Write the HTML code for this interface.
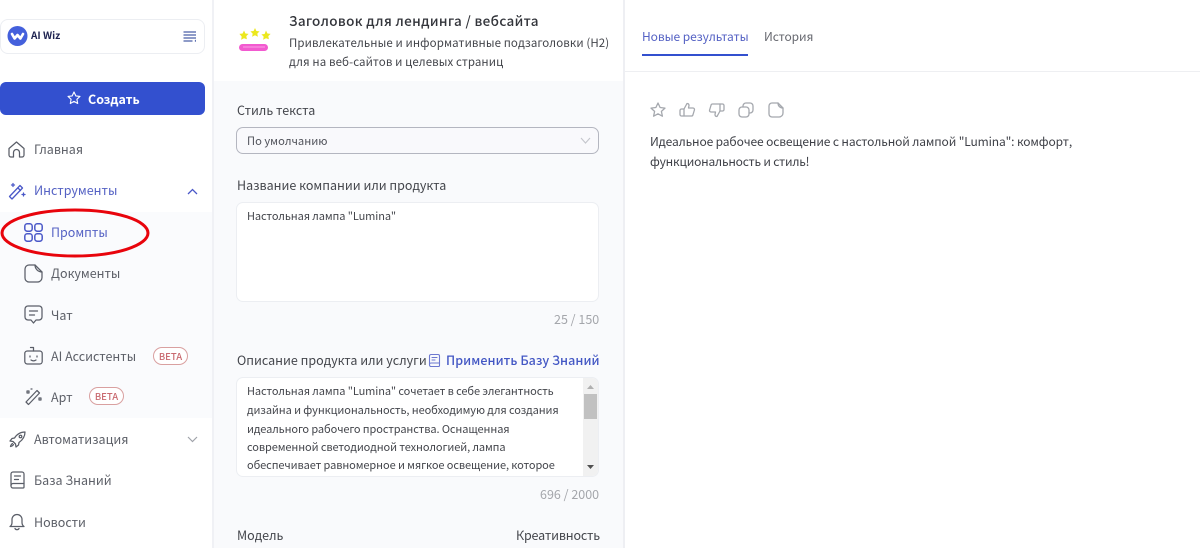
<!DOCTYPE html>
<html lang="ru">
<head>
<meta charset="utf-8">
<title>AI Wiz</title>
<style>
html,body{margin:0;padding:0;width:1200px;height:548px;overflow:hidden;background:#fff}
body{position:relative;font-family:"Noto Sans CJK SC","Liberation Sans",sans-serif;color:#3d3d45}
.t{position:absolute;white-space:nowrap;line-height:18px;font-size:13px}
.b{position:absolute;box-sizing:border-box}
svg{position:absolute;overflow:visible}
.i{fill:none;stroke:#5a5e68;stroke-width:1.25;stroke-linecap:round;stroke-linejoin:round}
.ib{fill:none;stroke:#4a58c8;stroke-width:1.3;stroke-linecap:round;stroke-linejoin:round}
.g{fill:none;stroke:#a5a8ae;stroke-width:1.3;stroke-linecap:round;stroke-linejoin:round}
.nav{color:#5d6068;font-size:12.5px}
.blue{color:#5562c4}
.beta{position:absolute;box-sizing:border-box;width:35px;height:18px;border:1px solid #d9a0a0;border-radius:9px;color:#c96a70;font-size:9.5px;line-height:16px;text-align:center;font-weight:500;background:#fff}
.lab{color:#44464c;font-size:12.5px}
.ta{color:#44464c;font-size:11px;letter-spacing:-.09px}
.cnt{color:#a4a6ab;font-size:12.5px}
</style>
</head>
<body>
<!-- sidebar -->
<div class="b" style="left:0;top:0;width:213px;height:548px;background:#fff"></div>
<div class="b" style="left:0;top:212px;width:213px;height:206px;background:#fafbfd"></div>
<div class="b" style="left:212px;top:0;width:2px;height:548px;background:#f0f1f5"></div>
<div class="b" style="left:0;top:19px;width:205px;height:35px;border:1px solid #eceef2;border-radius:8px;background:#fff"></div>
<svg style="left:7px;top:26px" width="21" height="20" viewBox="0 0 21 20"><circle cx="10.5" cy="10" r="10" fill="#4460dc"/><path d="M5 8l2.600 4.500L10.500 9l2.900 3.500L16 8" fill="none" stroke="#fff" stroke-width="2.600" stroke-linecap="round" stroke-linejoin="round"/></svg>
<div class="t" style="left:31px;top:26px;font-size:10px;font-weight:700;color:#1e2350">AI Wiz</div>
<svg style="left:183px;top:31px" width="14" height="11" viewBox="0 0 14 11"><path d="M.5 1h12.500M.5 4h12.500M.5 7h12.500M.5 10h9" fill="none" stroke="#4b5fa8" stroke-width="1.200"/><path d="M13 8.500l-1.500 1.500 1.500 1z" fill="#4b5fa8"/></svg>
<div class="b" style="left:0;top:82px;width:205px;height:33px;background:#3350cf;border-radius:6px"></div>
<svg style="left:67px;top:91px" width="14" height="14" viewBox="0 0 14 14"><path d="M7 1l1.800 3.900 4.200.5-3.100 2.900.8 4.200L7 10.400l-3.700 2.100.8-4.200L1 5.400l4.200-.5z" fill="none" stroke="#fff" stroke-width="1.100" stroke-linejoin="round"/></svg>
<div class="t" style="left:88px;top:90px;color:#fff;font-weight:700;font-size:12.500px">Создать</div>

<svg class="i" style="left:8px;top:141px" width="17" height="17" viewBox="0 0 17 17"><path d="M1 7.500L8.500 1 16 7.500V14a2 2 0 0 1-2 2h-2.500v-4.500a3 3 0 0 0-6 0V16H3a2 2 0 0 1-2-2z"/></svg>
<div class="t nav" style="left:34px;top:140px">Главная</div>

<svg class="ib" style="left:8px;top:182px" width="18" height="18" viewBox="0 0 18 18"><path d="M1.500 14.500L12 3.500l2.500 2.500L4 17zM10 6l2.500 2.500"/><path d="M5 1.500v3M3.500 3h3M15.500 11v3M14 12.500h3"/></svg>
<div class="t nav blue" style="left:34px;top:181px">Инструменты</div>
<svg style="left:187px;top:188px" width="11" height="7" viewBox="0 0 11 7"><path d="M1 6l4.500-4.500L10 6" fill="none" stroke="#4a58c8" stroke-width="1.300"/></svg>

<svg class="ib" style="left:24px;top:223px;stroke-width:1.500" width="19" height="19" viewBox="0 0 19 19"><rect x=".8" y=".8" width="7.400" height="7.400" rx="2.400"/><rect x="10.800" y=".8" width="7.400" height="7.400" rx="2.400"/><rect x=".8" y="10.800" width="7.400" height="7.400" rx="2.400"/><rect x="10.800" y="10.800" width="7.400" height="7.400" rx="2.400"/></svg>
<div class="t nav blue" style="left:51px;top:223px">Промпты</div>
<svg style="left:0;top:208px" width="152" height="52" viewBox="0 0 152 52"><ellipse cx="75" cy="25" rx="73" ry="23" fill="none" stroke="#e8040c" stroke-width="3"/></svg>

<svg class="i" style="left:24px;top:264px" width="19" height="19" viewBox="0 0 19 19"><path d="M5 1h6l7 7v5.500a4.500 4.500 0 0 1-4.500 4.500H5a4 4 0 0 1-4-4V5a4 4 0 0 1 4-4z"/><path d="M11 1a7 7 0 0 0 7 7"/></svg>
<div class="t nav" style="left:51px;top:264px">Документы</div>

<svg class="i" style="left:24px;top:305px" width="19" height="19" viewBox="0 0 19 19"><path d="M4 1h11a3 3 0 0 1 3 3v8a3 3 0 0 1-3 3h-3l-2.500 3L7 15H4a3 3 0 0 1-3-3V4a3 3 0 0 1 3-3z"/><path d="M5.500 6h8M5.500 10h5"/></svg>
<div class="t nav" style="left:51px;top:306px">Чат</div>

<svg class="i" style="left:24px;top:346px" width="19" height="19" viewBox="0 0 19 19"><rect x=".8" y="5" width="17.400" height="13" rx="2.500"/><path d="M9.500 5V1.500h-3M6 10v1M13 10v1M7 14c1.500 1 3.500 1 5 0"/></svg>
<div class="t nav" style="left:51px;top:347px">AI Ассистенты</div>
<div class="beta" style="left:153px;top:347px">BETA</div>

<svg class="i" style="left:25px;top:388px" width="17" height="17" viewBox="0 0 17 17"><path d="M1 14L12 2.500l2.500 2.500L3.500 16.500z"/><path d="M2 3h2v2H2zM6 1h1M14 10h2v2h-2z" stroke-width="1.200"/></svg>
<div class="t nav" style="left:51px;top:388px">Арт</div>
<div class="beta" style="left:89px;top:387px">BETA</div>

<svg class="i" style="left:9px;top:431px" width="17" height="17" viewBox="0 0 17 17"><path d="M16 1c-5 0-8 2-10.500 6L3 7.500 1 10l3 .5 2.500 2.500.5 3 2.500-2 .5-2.500C13.500 9 16 6 16 1z"/><circle cx="11.500" cy="5.500" r="1.300"/><path d="M3.500 12.500c-1 .5-1.800 2-2 3 1-.2 2.500-1 3-2"/></svg>
<div class="t nav" style="left:34px;top:430px">Автоматизация</div>
<svg style="left:187px;top:436px" width="11" height="7" viewBox="0 0 11 7"><path d="M1 1l4.500 4.500L10 1" fill="none" stroke="#a0a3aa" stroke-width="1.200"/></svg>

<svg class="i" style="left:10px;top:471px" width="15" height="18" viewBox="0 0 15 18"><path d="M3 1h9a2 2 0 0 1 2 2v13a1 1 0 0 1-1 1H3a2 2 0 0 1-2-2V3a2 2 0 0 1 2-2z"/><path d="M1 14.500a2 2 0 0 1 2-2h11M4.500 5h6M4.500 8.500h4"/></svg>
<div class="t nav" style="left:34px;top:471px">База Знаний</div>

<svg class="i" style="left:9px;top:513px" width="16" height="18" viewBox="0 0 16 18"><path d="M1 13.500c1.500-1 2-2 2-4V6.500a5 5 0 0 1 10 0v3c0 2 .5 3 2 4z"/><path d="M6 15.500c.5 1.500 3.500 1.500 4 0"/></svg>
<div class="t nav" style="left:34px;top:513px">Новости</div>

<!-- middle -->
<div class="b" style="left:214px;top:0;width:409px;height:548px;background:#f9fafc"></div>
<div class="b" style="left:214px;top:0;width:409px;height:81px;background:#fff"></div>
<div class="b" style="left:623px;top:0;width:2px;height:548px;background:#eeeff3"></div>
<svg style="left:238px;top:28px" width="34" height="26" viewBox="0 0 34 26"><path d="M6 2.500l1.400 3 3.200.4-2.300 2.200.6 3.200L6 10.200l-2.900 1.600.6-3.200L1.400 5.900l3.200-.4z" fill="#ece81e"/><path d="M17 0l1.400 3 3.200.4-2.300 2.200.6 3.200L17 7.200l-2.900 1.600.6-3.200-2.300-2.200 3.200-.4z" fill="#ece81e"/><path d="M28 2.500l1.400 3 3.200.4-2.300 2.200.6 3.200L28 10.200l-2.900 1.600.6-3.200-2.300-2.200 3.200-.4z" fill="#ece81e"/><rect x="1" y="16" width="29" height="7" rx="3.500" fill="#f25ad0"/><path d="M5 19h22" stroke="#f9a0e6" stroke-width="1"/></svg>
<div class="t" style="left:289px;top:11px;font-size:13.500px;font-weight:500;color:#33353b;letter-spacing:.35px">Заголовок для лендинга / вебсайта</div>
<div class="t" style="left:289px;top:34px;font-size:11.500px;color:#44464c;letter-spacing:.09px">Привлекательные и информативные подзаголовки (H2)</div>
<div class="t" style="left:289px;top:53px;font-size:11.500px;color:#44464c;letter-spacing:.09px">для на веб-сайтов и целевых страниц</div>

<div class="t lab" style="left:237px;top:101px">Стиль текста</div>
<div class="b" style="left:236px;top:127px;width:363px;height:27px;background:#f9f9fc;border:1px solid #b4b6c0;border-radius:7px"></div>
<div class="t" style="left:247px;top:132px;font-size:11.200px;color:#50525a">По умолчанию</div>
<svg style="left:580px;top:137px" width="11" height="7" viewBox="0 0 11 7"><path d="M1 1l4.500 5L10 1" fill="none" stroke="#c4c6cc" stroke-width="1.100"/></svg>

<div class="t lab" style="left:237px;top:176px">Название компании или продукта</div>
<div class="b" style="left:236px;top:202px;width:363px;height:100px;background:#fff;border:1px solid #eceef2;border-radius:7px"></div>
<div class="t ta" style="left:247px;top:207px">Настольная лампа "Lumina"</div>
<div class="t cnt" style="left:554px;top:310px">25 / 150</div>

<div class="t lab" style="left:237px;top:351px">Описание продукта или услуги</div>
<svg class="ib" style="left:429px;top:354px;stroke-width:1.100;stroke:#6c78d0" width="11" height="13" viewBox="0 0 11 13"><path d="M2 .5h7a1.500 1.500 0 0 1 1.500 1.500v9.500a1 1 0 0 1-1 1H2a1.500 1.500 0 0 1-1.500-1.500V2A1.500 1.500 0 0 1 2 .5z"/><path d="M.5 10A1.500 1.500 0 0 1 2 9h8.500M3 3.500h5M3 6h3"/></svg>
<div class="t" style="left:446px;top:351px;color:#4357c4;font-weight:500;font-size:12.500px;letter-spacing:.07px">Применить Базу Знаний</div>
<div class="b" style="left:236px;top:377px;width:363px;height:100px;background:#fff;border:1px solid #eceef2;border-radius:7px"></div>
<div class="b" style="left:583px;top:378px;width:15px;height:98px;background:#f1f1f1;border-radius:0 6px 6px 0"></div>
<div class="b" style="left:584px;top:394px;width:13px;height:25px;background:#c1c1c1"></div>
<svg style="left:586px;top:384px" width="9" height="86" viewBox="0 0 9 86"><path d="M1 5l3.500-4L8 5z" fill="#b0b0b0"/><path d="M1 81l3.500 4L8 81z" fill="#505050"/></svg>
<div class="t ta" style="left:247px;top:382px">Настольная лампа "Lumina" сочетает в себе элегантность</div>
<div class="t ta" style="left:247px;top:401px">дизайна и функциональность, необходимую для создания</div>
<div class="t ta" style="left:247px;top:420px">идеального рабочего пространства. Оснащенная</div>
<div class="t ta" style="left:247px;top:438px">современной светодиодной технологией, лампа</div>
<div class="t ta" style="left:247px;top:456px">обеспечивает равномерное и мягкое освещение, которое</div>
<div class="t cnt" style="left:540px;top:485px">696 / 2000</div>

<div class="t lab" style="left:237px;top:526px">Модель</div>
<div class="t lab" style="left:516px;top:526px;letter-spacing:-.15px">Креативность</div>

<!-- right -->
<div class="t" style="left:642px;top:28px;font-size:12px;letter-spacing:-.08px;color:#5562c4">Новые результаты</div>
<div class="t" style="left:764px;top:28px;font-size:12px;letter-spacing:-.1px;color:#66686f">История</div>
<div class="b" style="left:642px;top:54px;width:106px;height:2px;background:#3350cf"></div>
<div class="b" style="left:625px;top:71px;width:575px;height:1px;background:#eeeff2"></div>

<svg class="g" style="left:650px;top:102px" width="16" height="16" viewBox="0 0 16 16"><path d="M8 1l2.100 4.500 4.900.6-3.600 3.300 1 4.800L8 11.800l-4.400 2.400 1-4.800L1 6.100l4.900-.6z"/></svg>
<svg class="g" style="left:679px;top:102px" width="16" height="16" viewBox="0 0 16 16"><path d="M5 7l3-5.500c1.500 0 2 1 2 2L9.500 6H14a1.500 1.500 0 0 1 1.400 2l-1.500 5a1.500 1.500 0 0 1-1.500 1H5z"/><path d="M5 7H2.500A1.500 1.500 0 0 0 1 8.500v4A1.500 1.500 0 0 0 2.500 14H5"/></svg>
<svg class="g" style="left:709px;top:102px" width="16" height="16" viewBox="0 0 16 16"><path d="M11 9l-3 5.500c-1.500 0-2-1-2-2L6.500 10H2A1.500 1.500 0 0 1 .6 8l1.500-5a1.500 1.500 0 0 1 1.500-1H11z"/><path d="M11 9h2.500A1.500 1.500 0 0 0 15 7.500v-4A1.500 1.500 0 0 0 13.500 2H11"/></svg>
<svg class="g" style="left:738px;top:102px" width="16" height="16" viewBox="0 0 16 16"><rect x="1" y="5" width="10" height="10" rx="3"/><path d="M5 5V4a3 3 0 0 1 3-3h4a3 3 0 0 1 3 3v4a3 3 0 0 1-3 3h-1"/></svg>
<svg class="g" style="left:768px;top:102px" width="16" height="16" viewBox="0 0 16 16"><path d="M4 1h6l5 5v5a4 4 0 0 1-4 4H4a3 3 0 0 1-3-3V4a3 3 0 0 1 3-3z"/><path d="M10 1c0 3 2 5 5 5"/></svg>

<div class="t" style="left:650px;top:133px;font-size:12px;letter-spacing:-.13px;color:#3d3f46">Идеальное рабочее освещение с настольной лампой "Lumina": комфорт,</div>
<div class="t" style="left:650px;top:153px;font-size:12px;letter-spacing:-.2px;color:#3d3f46">функциональность и стиль!</div>
</body>
</html>
